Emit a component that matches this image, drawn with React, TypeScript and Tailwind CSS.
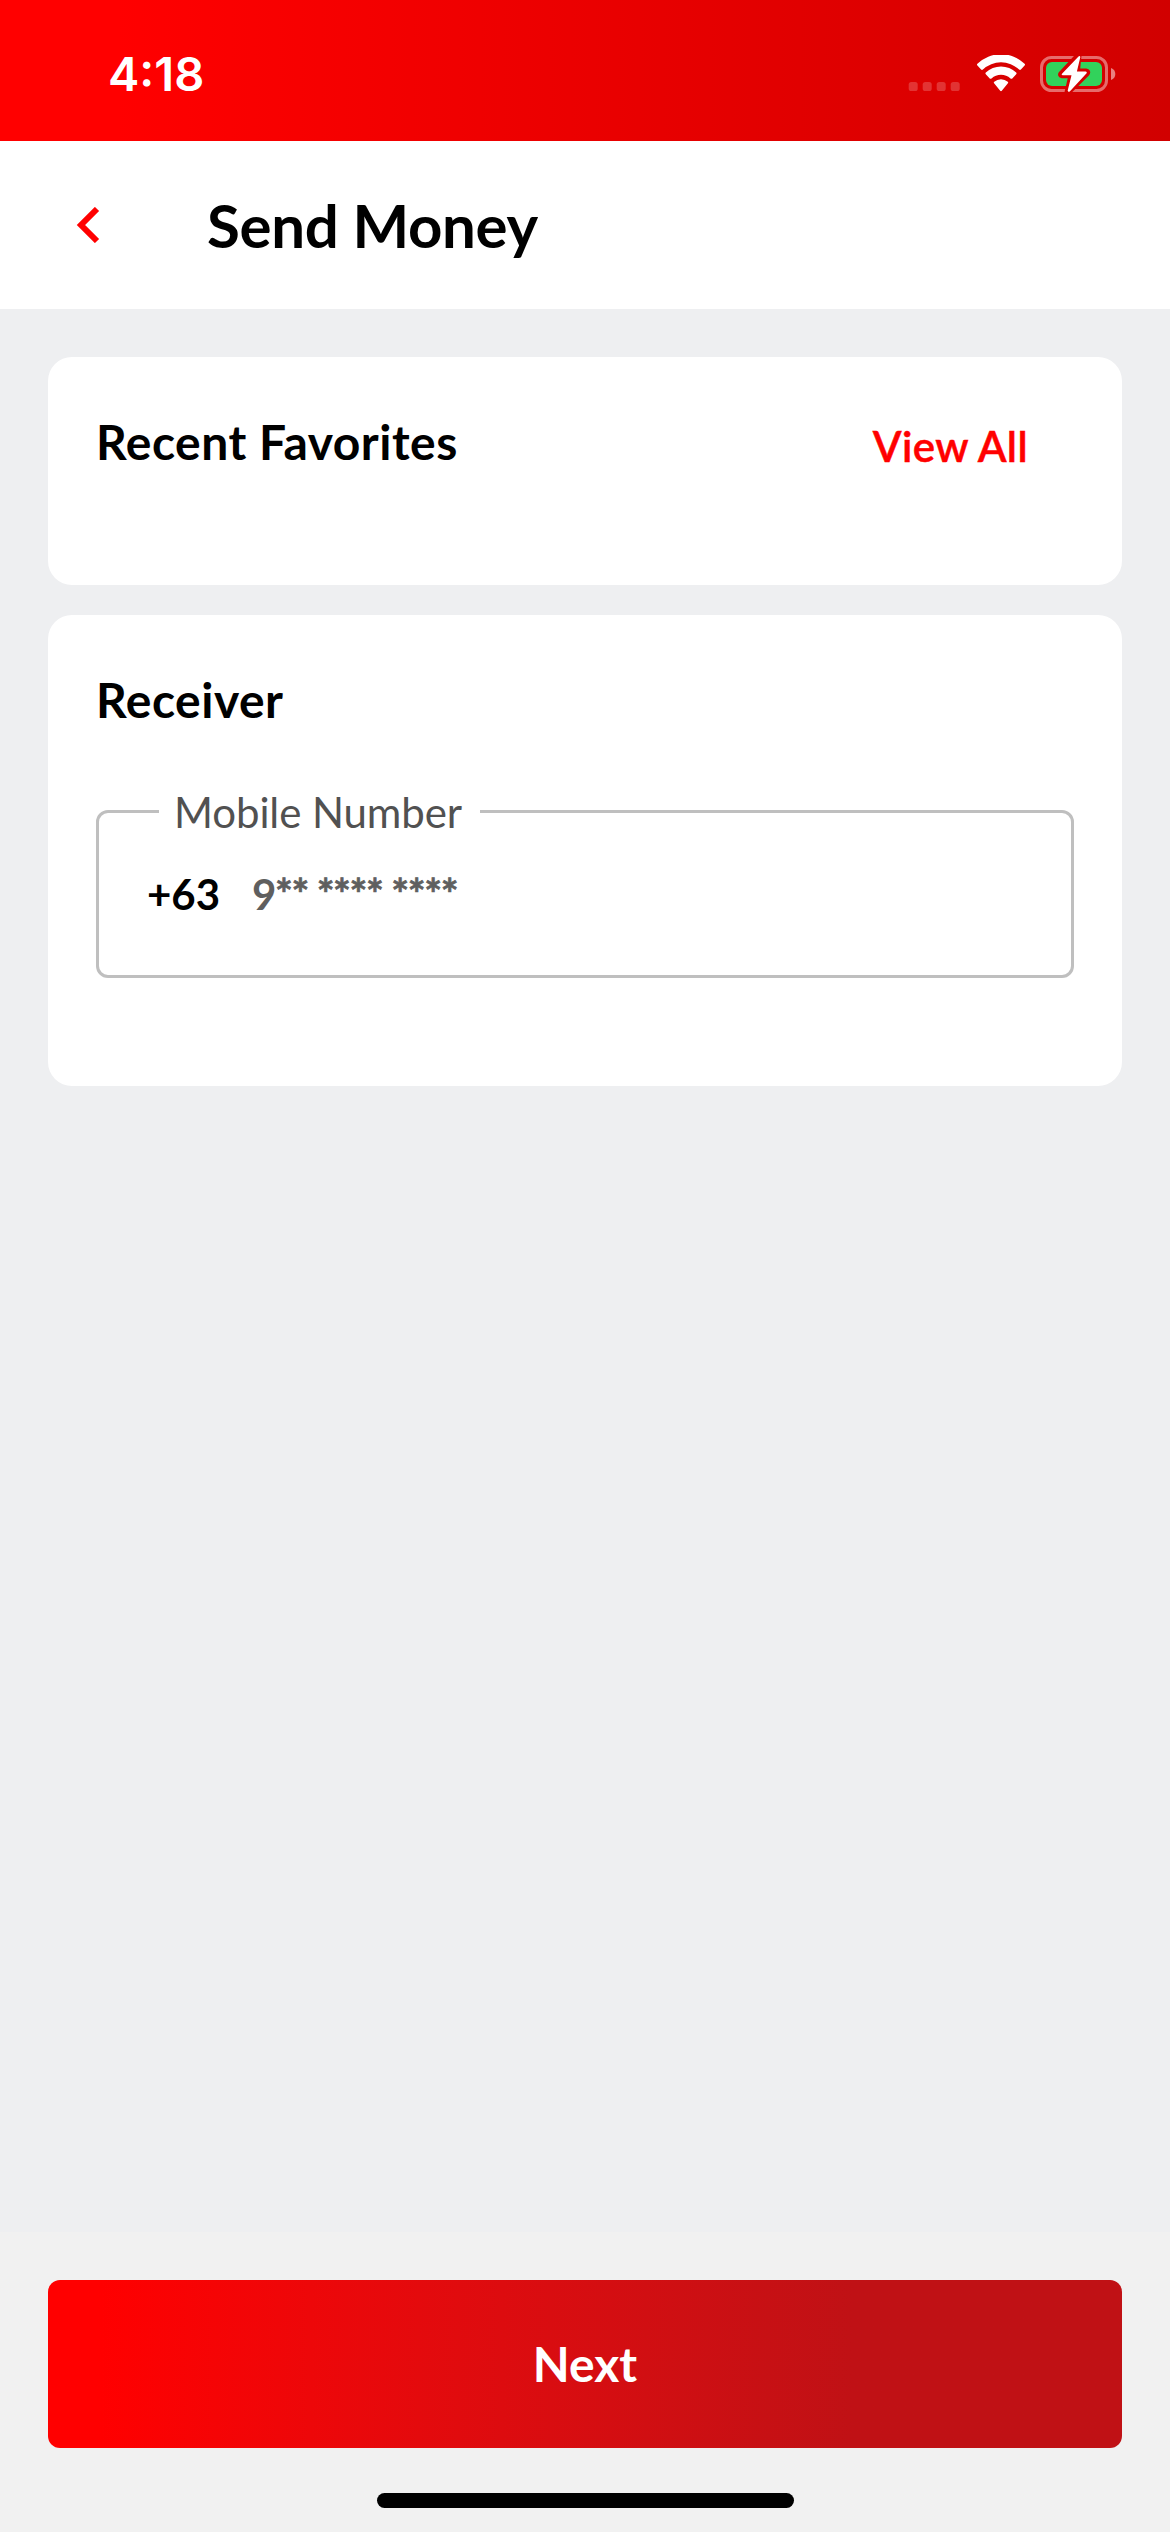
import React from "react";

function StatusIcons() {
  return (
    <div className="flex items-start">
      <svg width="52" height="10" viewBox="0 0 52 10" className="mt-[82px]" fill="#fff" fillOpacity="0.2">
        <rect x="0.7" y="0" width="9" height="9" rx="2.6" />
        <rect x="14.7" y="0" width="9" height="9" rx="2.6" />
        <rect x="28.7" y="0" width="9" height="9" rx="2.6" />
        <rect x="42.7" y="0" width="9" height="9" rx="2.6" />
      </svg>
      <svg width="50" height="38" viewBox="0 0 50 38" className="ml-4 mt-[55px]" fill="#fff">
        <path d="M1.4 10.5Q0.5 9.6 1.4 8.7A34 34 0 0 1 48.6 8.7Q49.5 9.6 48.6 10.5L44.9 14.5Q44 15.4 43.1 14.5A26.4 26.4 0 0 0 6.9 14.5Q6 15.4 5.1 14.5Z" />
        <path d="M9.8 19.3Q8.9 18.4 9.8 17.6A22 22 0 0 1 40.2 17.6Q41.1 18.4 40.2 19.3L36.3 23.4Q35.4 24.2 34.5 23.4A14.2 14.2 0 0 0 15.5 23.4Q14.6 24.2 13.7 23.4Z" />
        <path d="M18.1 28.3Q17.3 27.5 18.2 26.7A10.4 10.4 0 0 1 31.8 26.7Q32.7 27.5 31.9 28.3L25.8 35.7Q25 36.6 24.2 35.7Z" />
      </svg>
      <svg width="78" height="42" viewBox="0 0 78 42" className="ml-[14px] mt-[53px]">
        <defs>
          <mask id="bolt-gap">
            <rect width="78" height="42" fill="#fff" />
            <path d="M38.5 2.5L21.5 20.7Q20.4 22 22.2 22.3H31.5L27.5 39.5L46.8 20.3Q47.9 18.8 46 18.6H36.9Z" fill="#000" stroke="#000" strokeWidth="6" strokeLinejoin="round" />
          </mask>
        </defs>
        <g mask="url(#bolt-gap)">
          <rect x="1.5" y="4.5" width="65" height="33" rx="10" fill="none" stroke="#fff" strokeOpacity="0.42" strokeWidth="3" />
          <rect x="6" y="9" width="56" height="24" rx="6" fill="#32d25b" />
        </g>
        <path d="M71 15Q75.3 16.5 75.3 21T71 27Z" fill="#fff" fillOpacity="0.5" />
        <path d="M38.5 3.5L22 20.7Q20.9 22 22.6 22.3H31.5L27.7 37.5Q28 39.6 30 38.2L46.6 20.3Q47.5 18.8 45.6 18.6H36.9L40.3 4.2Q40.2 2.3 38.5 3.5Z" fill="#fff" />
      </svg>
    </div>
  );
}

export default function App() {
  return (
    <div className="flex h-[2532px] w-[1170px] flex-col overflow-hidden bg-[#eeeff1] font-['Lato',sans-serif] text-black">
      <div className="flex h-[141px] shrink-0 items-start justify-between bg-linear-to-r from-[#ff0000] from-10% to-[#d10000] pl-[108px] pr-[52px]">
        <span className="mt-[45px] font-['Inter',sans-serif] text-[47px] leading-[58px] font-semibold text-white">4:18</span>
        <StatusIcons />
      </div>

      <header className="flex h-[168px] shrink-0 items-center bg-white pl-[76px]">
        <button className="h-[36px] w-[24px]" aria-label="Back">
          <svg width="24" height="36" viewBox="0 0 24 36" fill="none" stroke="#ff0000" strokeWidth="6">
            <path d="M21 2L5 18L21 34" />
          </svg>
        </button>
        <h1 className="ml-[107px] text-[60px] leading-[72px] font-bold tracking-[-0.35px]">Send Money</h1>
      </header>

      <main className="flex flex-1 flex-col gap-[30px] px-12 pt-12">
        <section className="flex h-[228px] items-start justify-between rounded-[24px] bg-white pl-12 pr-[94px] pt-[56px]">
          <h2 className="text-[48px] leading-[58px] font-bold tracking-[0.5px]">Recent Favorites</h2>
          <a className="mt-[8px] text-[42px] leading-[50px] font-semibold tracking-[0.4px] text-[#ff0000] [-webkit-text-stroke:0.5px_#ff0000]">
            View All
          </a>
        </section>

        <section className="h-[471px] rounded-[24px] bg-white px-12 pt-[56px]">
          <h2 className="text-[48px] leading-[58px] font-bold tracking-[0.5px]">Receiver</h2>
          <fieldset className="mt-[58px] h-[191px] rounded-[12px] border-3 border-[#bfbfbf]">
            <legend className="ml-[60px] h-[49px] w-[321px] pl-[15px] text-[42px] leading-[50px] tracking-[-0.1px] whitespace-nowrap text-[#515151]">
              Mobile Number
            </legend>
            <div className="mt-[33px] flex pl-[48px] text-[42px] leading-[50px] font-bold">
              <span className="w-[105px]">+63</span>
              <span className="tracking-[-1.4px] text-[#5f5f5f]">
                9<span className="[-webkit-text-stroke:0.7px_#5f5f5f]">** **** ****</span>
              </span>
            </div>
          </fieldset>
        </section>
      </main>

      <footer className="flex h-[300px] shrink-0 flex-col items-center bg-[#f1f1f1] px-12 pt-12">
        <button className="h-[168px] w-full rounded-[12px] bg-linear-to-r from-[#ff0000] from-5% to-[#c01115] to-75% text-[48px] leading-[58px] font-bold text-white">
          Next
        </button>
        <div className="mt-[45px] h-[15px] w-[417px] rounded-full bg-black" />
      </footer>
    </div>
  );
}
